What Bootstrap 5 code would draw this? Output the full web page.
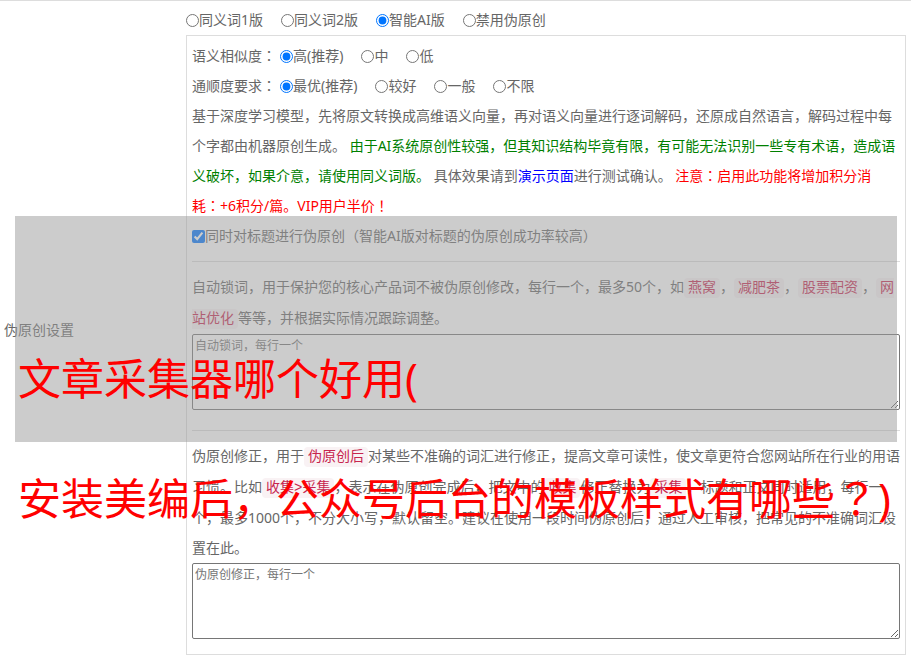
<!DOCTYPE html>
<html lang="zh-CN">
<head>
<meta charset="utf-8">
<meta name="viewport" content="width=device-width, initial-scale=1">
<title>伪原创设置</title>
<link href="https://cdn.jsdelivr.net/npm/bootstrap@5.3.0/dist/css/bootstrap.min.css" rel="stylesheet">
<style>
  body {
    font-family: "Noto Sans", "Noto Sans CJK SC", sans-serif;
    font-size: 14px;
    line-height: 30px;
    color: #666;
    background: #fff;
  }
  .setting-row { border-top: 1px solid #ddd; }
  .setting-name { width: 186px; padding-left: 4px; }
  .setting-body { min-width: 0; padding: 4px 5px 3px 0; }
  .choices { column-gap: 18px; }
  .choices input, .title-check input { width: 13px; height: 13px; }
  .choices-title { margin-right: -14px; }
  .ai-panel { border: 1px solid #ddd; padding: 5px; }
  .ai-panel hr { margin: 10px 0; border-top: 1px solid #ddd; opacity: 1; }
  .ai-panel a { color: #00f; }
  .note-green { color: #008000; }
  .note-red { color: #f00; }
  .centered-punct { font-family: "Noto Sans CJK TC", sans-serif; line-height: 1; }
  code {
    font-family: "Liberation Mono", "Noto Sans CJK SC", monospace;
    font-size: 14px;
    line-height: 30px;
    color: #c7254e;
    background: #f9f2f4;
    border-radius: 4px;
    padding: 2px 4px;
  }
  .word-box { padding-bottom: 10px; }
  textarea {
    height: 76px;
    padding: 2px;
    border: 1px solid #767676;
    border-radius: 2px;
    font-size: 12px;
    line-height: 18px;
  }
  textarea::placeholder { color: #757575; }
  .caption-overlay {
    top: 216px;
    left: 15px;
    right: 14px;
    height: 226px;
    padding: 103px 0 0 3px;
    background: rgba(153, 153, 153, .5);
    color: #f00;
    font-size: 43px;
    line-height: 120px;
  }
</style>
</head>
<body>
<main class="position-relative">
  <form class="setting-row d-flex align-items-center">
    <div class="setting-name flex-shrink-0">伪原创设置</div>
    <div class="setting-body flex-grow-1">
      <div class="choices d-flex flex-wrap" role="radiogroup" aria-label="伪原创设置">
        <label class="d-flex align-items-center"><input type="radio" name="mode">同义词1版</label>
        <label class="d-flex align-items-center"><input type="radio" name="mode">同义词2版</label>
        <label class="d-flex align-items-center"><input type="radio" name="mode" checked>智能AI版</label>
        <label class="d-flex align-items-center"><input type="radio" name="mode">禁用伪原创</label>
      </div>
      <div class="ai-panel">
        <div class="choices d-flex flex-wrap" role="radiogroup" aria-labelledby="similar">
          <span class="choices-title" id="similar">语义相似度<span class="centered-punct" lang="zh-TW">：</span></span>
          <label class="d-flex align-items-center"><input type="radio" name="similar" checked>高(推荐)</label>
          <label class="d-flex align-items-center"><input type="radio" name="similar">中</label>
          <label class="d-flex align-items-center"><input type="radio" name="similar">低</label>
        </div>
        <div class="choices d-flex flex-wrap" role="radiogroup" aria-labelledby="fluency">
          <span class="choices-title" id="fluency">通顺度要求<span class="centered-punct" lang="zh-TW">：</span></span>
          <label class="d-flex align-items-center"><input type="radio" name="fluency" checked>最优(推荐)</label>
          <label class="d-flex align-items-center"><input type="radio" name="fluency">较好</label>
          <label class="d-flex align-items-center"><input type="radio" name="fluency">一般</label>
          <label class="d-flex align-items-center"><input type="radio" name="fluency">不限</label>
        </div>
        <p class="mb-0">基于深度学习模型，先将原文转换成高维语义向量，再对语义向量进行逐词解码，还原成自然语言，解码过程中每个字都由机器原创生成。 <span class="note-green">由于AI系统原创性较强，但其知识结构毕竟有限，有可能无法识别一些专有术语，造成语义破坏，如果介意，请使用同义词版。</span> 具体效果请到<a class="text-decoration-none" href="#">演示页面</a>进行测试确认。 <span class="note-red">注意<span class="centered-punct" lang="zh-TW">：</span>启用此功能将增加积分消<span class="text-nowrap">耗<span class="centered-punct" lang="zh-TW">：</span>+6积分/篇。</span>VIP用户半价<span class="centered-punct" lang="zh-TW">！</span></span></p>
        <label class="title-check d-flex align-items-center"><input type="checkbox" checked>同时对标题进行伪原创（智能AI版对标题的伪原创成功率较高）</label>
        <hr>
        <div class="word-box">
          <label class="d-block" for="lock-words">自动锁词，用于保护您的核心产品词不被伪原创修改，每行一个，最多50个，如<code>燕窝</code>，<code>减肥茶</code>，<code>股票配资</code>，<code>网站优化</code>等等，并根据实际情况跟踪调整。</label>
          <textarea class="d-block w-100" id="lock-words" placeholder="自动锁词，每行一个"></textarea>
        </div>
        <hr>
        <div class="word-box">
          <label class="d-block" for="fix-words">伪原创修正，用于<code>伪原创后</code>对某些不准确的词汇进行修正，提高文章可读性，使文章更符合您网站所在行业的用语习惯。比如<code>收集&gt;采集</code>，表示在伪原创完成后，把文中的<code>收集</code>修正替换为<code>采集</code>，标题和正文同时适用，每行一个，最多1000个，不分大小写，默认留空。建议在使用一段时间伪原创后，通过人工审核，把常见的不准确词汇设置在此。</label>
          <textarea class="d-block w-100" id="fix-words" placeholder="伪原创修正，每行一个"></textarea>
        </div>
      </div>
    </div>
  </form>
  <div class="caption-overlay position-absolute text-nowrap pe-none">
    <div>文章采集器哪个好用(</div>
    <div>安装美编后，公众号后台的模板样式有哪些<span class="centered-punct" lang="zh-TW">？</span>)</div>
  </div>
</main>
<script src="https://cdn.jsdelivr.net/npm/bootstrap@5.3.0/dist/js/bootstrap.bundle.min.js"></script>
</body>
</html>
